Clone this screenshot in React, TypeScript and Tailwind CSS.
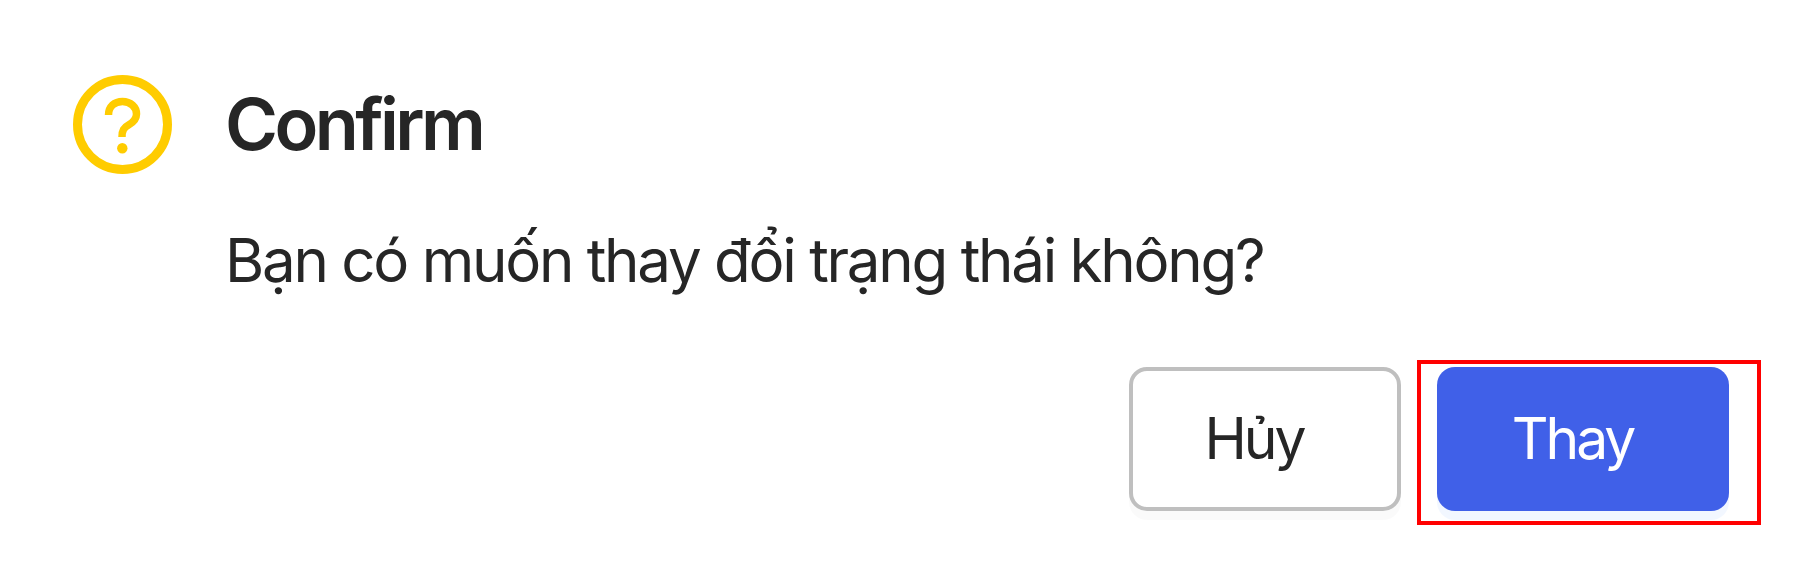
export default function App() {
  return (
    <div className="w-[1803px] h-[571px] bg-white overflow-hidden font-['Inter','Noto_Sans',sans-serif] text-[#262626]">
      <div className="pl-[73px] pr-[74px] pt-[75px]">
        <div className="flex items-start gap-[53px]">
          <svg className="shrink-0" width="99" height="99" viewBox="0 0 99 99" fill="none">
            <circle cx="49.5" cy="49.5" r="45" stroke="#FFCC00" strokeWidth="9" />
            <path d="M35.5 40 C35.5 31.5 41.5 26.5 49.5 26.5 C57.5 26.5 63.5 32 63.5 39 C63.5 44.5 60 47.5 55.5 50 C51 52.5 49 55 49 62" stroke="#FFCC00" strokeWidth="7.5" />
            <circle cx="49.3" cy="73.3" r="5.2" fill="#FFCC00" />
          </svg>
          <div className="flex-1 min-w-0">
            <div className="text-[72px] leading-[98px] font-semibold tracking-[-3.6px]">Confirm</div>
            <div className="mt-[47px] text-[60px] leading-[80px] font-normal tracking-[-2.25px]">Bạn có muốn thay đổi trạng thái không?</div>
          </div>
        </div>
        <div className="mt-[67px] flex justify-end gap-[36px]">
          <button className="w-[272px] h-[144px] pr-[22px] rounded-[18px] border-[4.5px] border-[#bfbfbf] bg-white text-[57px] tracking-[-3px] shadow-[0_9px_0_rgba(0,0,0,0.02)]">Hủy</button>
          <div className="relative">
            <button className="block w-[292px] h-[144px] pr-[21px] rounded-[18px] bg-[#4060e8] text-white text-[57px] tracking-[-3px] shadow-[0_9px_0_rgba(5,100,255,0.05)]">Thay</button>
            <div className="absolute left-[-20px] right-[-32px] top-[-7px] bottom-[-14px] border-[4px] border-[#ff0000]"></div>
          </div>
        </div>
      </div>
    </div>
  );
}
